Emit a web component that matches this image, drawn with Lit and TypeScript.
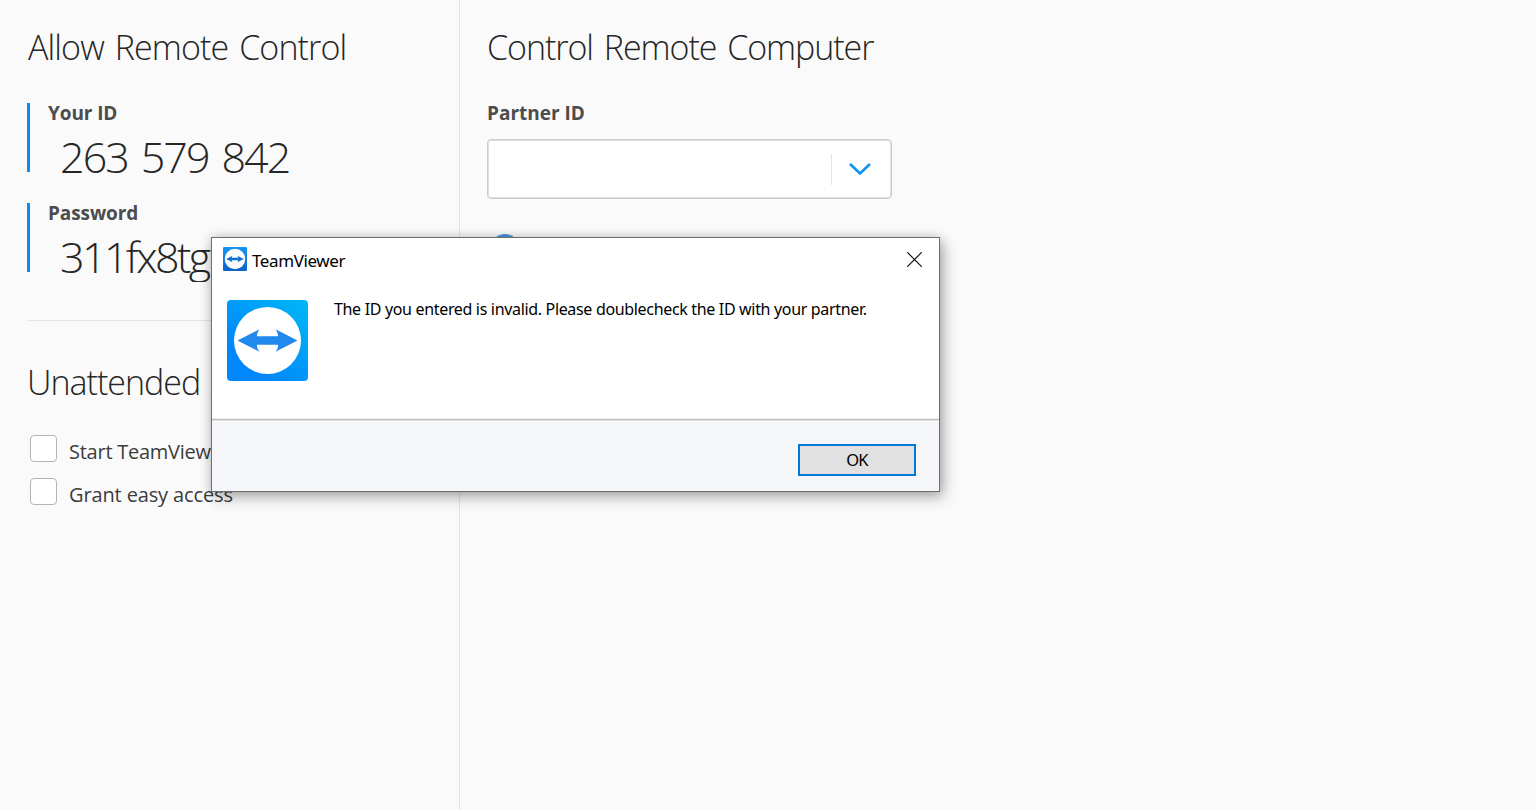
import { LitElement, html, css } from "lit";
import { customElement, property } from "lit/decorators.js";

@customElement("tv-logo")
class TvLogo extends LitElement {
  @property({ type: Boolean }) small = false;
  static styles = css`
    :host { display: block; }
    svg { display: block; width: 100%; height: 100%; }
  `;
  render() {
    const from = this.small ? "#0b62c8" : "#0087fb";
    const to = this.small ? "#1597ee" : "#00b8f6";
    const arrow = this.small ? "#1570cf" : "#2188ee";
    return html`<svg viewBox="0 0 81 81">
      <defs>
        <linearGradient id="bg" x1=${this.small ? "0.5" : "0.3"} y1=${this.small ? "1" : "0.8"} x2=${this.small ? "0.5" : "1"} y2="0">
          <stop offset="0" stop-color=${from}></stop>
          <stop offset="1" stop-color=${to}></stop>
        </linearGradient>
      </defs>
      <rect width="81" height="81" rx="4" fill="url(#bg)"></rect>
      <circle cx="40.5" cy="40.5" r=${this.small ? "34.5" : "33.5"} fill="#fff"></circle>
      <path fill=${arrow} d="M10.5 40.5 L32.5 29.3 Q29.5 33 30 36.3 H51 Q51.5 33 48.5 29.3 L70.5 40.5 L48.5 51.7 Q51.5 48 51 44.7 H30 Q29.5 48 32.5 51.7 Z"></path>
    </svg>`;
  }
}

@customElement("tv-dialog")
class TvDialog extends LitElement {
  static styles = css`
    :host {
      box-sizing: border-box; display: flex; flex-direction: column;
      background: #fff; border: 1px solid #6e6e6e; color: #000;
      font-family: "Noto Sans", sans-serif; font-size: 17px;
      box-shadow: 3px 5px 14px rgba(0, 0, 0, 0.3), 0 0 10px rgba(0, 0, 0, 0.14);
    }
    .title { display: flex; height: 44px; padding: 0 17px 0 11px; }
    .mini { width: 24px; height: 24px; margin-top: 9px; }
    .name { margin: 11px 0 0 5px; line-height: 24px; flex: 1; letter-spacing: -0.4px; white-space: nowrap; }
    .close { width: 15px; height: 15px; margin-top: 14px; }
    .body { display: flex; flex: 1; padding: 18px 15px 0; gap: 26px; }
    .logo { width: 81px; height: 81px; }
    .text { margin: -1px 0 0; line-height: 20px; white-space: nowrap; font-size: 16px; letter-spacing: -0.33px; }
    .foot {
      box-sizing: border-box; height: 72px; border-top: 1px solid #c2c2c2; background: #f4f6f9;
      box-shadow: 0 -1px #eeeeee, inset 0 1px #dcdcdc, inset 0 2px #fff; display: flex; justify-content: flex-end; padding: 24px 23px 0 0;
    }
    .ok {
      box-sizing: border-box; width: 118px; height: 32px; padding: 0; border: 2px solid #0078d7;
      border-radius: 0; background: #e1e1e1; color: #000; font: 16.5px/28px "Noto Sans", sans-serif;
      letter-spacing: -0.8px;
    }
  `;
  render() {
    return html`
      <div class="title">
        <tv-logo class="mini" small></tv-logo>
        <span class="name">TeamViewer</span>
        <svg class="close" viewBox="0 0 15 15"><path d="M0.2 0.2 L14.8 14.8 M14.8 0.2 L0.2 14.8" stroke="#111" stroke-width="1.2"></path></svg>
      </div>
      <div class="body">
        <tv-logo class="logo"></tv-logo>
        <p class="text">The ID you entered is invalid. Please doublecheck the ID with your partner.</p>
      </div>
      <div class="foot"><button class="ok">OK</button></div>
    `;
  }
}

@customElement("app-root")
class AppRoot extends LitElement {
  static styles = css`
    :host {
      display: flex; height: 810px; overflow: hidden; position: relative;
      background: #fafafa; color: #262626; font-family: "Open Sans", sans-serif;
    }
    .left { box-sizing: border-box; width: 460px; border-right: 1px solid #e3e5e7; padding: 25px 27px 0; }
    .right { flex: 1; padding: 25px 27px 0; }
    h1 { margin: 0; font-weight: 300; font-size: 34px; line-height: 44px; white-space: nowrap; }
    .cred { box-sizing: border-box; height: 69px; border-left: 3px solid #0a8cf0; padding-left: 18px; }
    .id { margin: 34px 0 31px; }
    .label { font-weight: 700; font-size: 19px; line-height: 20px; color: #4c4c4c; white-space: nowrap; letter-spacing: -0.1px; }
    .value { font-weight: 300; font-size: 43px; line-height: 50px; margin-top: 9px; padding-left: 12px; white-space: nowrap; font-stretch: 93%; }
    .v-id { letter-spacing: -1.9px; word-spacing: 3.5px; }
    .v-pw { letter-spacing: -2.6px; height: 50px; overflow: hidden; }
    .rule { height: 1px; background: #dfe7ee; margin: 48px 0 39px; }
    .checks { display: grid; gap: 16px; margin: 31px 0 0 3px; }
    .check { display: flex; gap: 12px; height: 27px; font-size: 20px; line-height: 33px; color: #3c3c3c; white-space: nowrap; letter-spacing: -0.13px; }
    .start { letter-spacing: -0.25px; }
    .box { box-sizing: border-box; width: 27px; height: 27px; border: 1.5px solid #b4b4b4; border-radius: 4px; background: #fff; }
    .partner { margin: 34px 0 16px; letter-spacing: 0; }
    .field {
      box-sizing: border-box; width: 405px; height: 60px; border: 1px solid #cccccc; border-radius: 4px; box-shadow: inset 0 0 0 1px #e0e0e0;
      background: #fff; display: flex; align-items: center; justify-content: flex-end; padding-right: 19px; gap: 16px;
    }
    .sep { width: 1px; height: 31px; background: #dde4ea; }
    .chev { width: 24px; height: 14px; }
    .radio { width: 28px; height: 28px; border-radius: 50%; background: #4a96e0; margin: 35px 0 0 4px; }
    .dialog { position: absolute; left: 211px; top: 237px; width: 729px; height: 255px; }
    .h-allow { letter-spacing: -0.9px; word-spacing: 3px; padding-left: 1px; }
    .h-un { letter-spacing: -1px; word-spacing: 3px; }
    .h-ctl { letter-spacing: -1.05px; word-spacing: 3px; }
  `;
  render() {
    return html`
      <section class="left">
        <h1 class="h-allow">Allow Remote Control</h1>
        <div class="cred id"><div class="label">Your ID</div><div class="value v-id">263 579 842</div></div>
        <div class="cred"><div class="label">Password</div><div class="value v-pw">311fx8tg</div></div>
        <div class="rule"></div>
        <h1 class="h-un">Unattended Access</h1>
        <div class="checks">
          <label class="check start"><span class="box"></span><span>Start TeamViewer with Windows</span></label>
          <label class="check"><span class="box"></span><span>Grant easy access</span></label>
        </div>
      </section>
      <section class="right">
        <h1 class="h-ctl">Control Remote Computer</h1>
        <div class="label partner">Partner ID</div>
        <div class="field">
          <span class="sep"></span>
          <svg class="chev" viewBox="0 0 24 14"><path d="M2 2 L12 11.5 L22 2" fill="none" stroke="#0a93f5" stroke-width="2.6"></path></svg>
        </div>
        <div class="radio"></div>
      </section>
      <tv-dialog class="dialog"></tv-dialog>
    `;
  }
}
